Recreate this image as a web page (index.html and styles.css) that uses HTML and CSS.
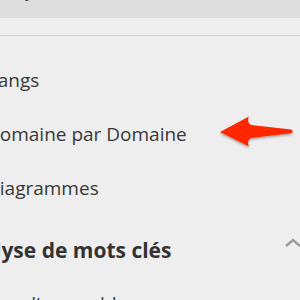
FILE: index.html
```html
<!DOCTYPE html>
<html lang="fr">
<head>
  <meta charset="UTF-8" />
  <title>Menu</title>
  <link rel="stylesheet" href="styles.css">
</head>
<body>

<div class="topbar"><span class="cut">Analy</span></div>
<div class="subbar"></div>

<ul class="menu">
  <li>Rangs</li>
  <li>Domaine par Domaine</li>
  <li>Diagrammes</li>
</ul>

<div class="section">
  <div class="section-head">
    <span>Analyse de mots clés</span>
    <svg class="chevron" width="18" height="10" viewBox="0 0 18 10">
      <path d="M2 8 L9 2 L16 8" fill="none" stroke="#9a9a9a" stroke-width="2.4" />
    </svg>
  </div>
  <ul class="menu sub">
    <li>Vue d'ensemble</li>
  </ul>
</div>

<svg class="pointer" width="90" height="50" viewBox="215 110 90 50">
  <defs>
    <filter id="soft" x="-10%" y="-20%" width="130%" height="150%">
      <feDropShadow dx="0" dy="1.5" stdDeviation="1.2" flood-color="#000" flood-opacity="0.35" />
    </filter>
  </defs>
  <path filter="url(#soft)" fill="#ff2600"
        d="M220 132 L249 116.5 Q246 122 251 125 L291 129.6 Q294.5 131.4 291 133.2 L251 138 Q246 141 249 146.5 Z" />
</svg>

</body>
</html>
```

FILE: styles.css
```css
* {
  margin: 0;
  padding: 0;
  box-sizing: border-box;
}

body {
  width: 300px;
  height: 300px;
  overflow: hidden;
  position: relative;
  background-color: #eeeeee;
  color: #383838;
  font-family: 'Open Sans', 'Noto Sans', sans-serif;
}

.topbar {
  height: 18px;
  background-color: #dddddd;
  overflow: hidden;
}

.topbar .cut {
  display: block;
  margin-top: -22px;
  margin-left: -12px;
  font-size: 18px;
  line-height: 24px;
  color: #444;
}

.subbar {
  height: 18px;
  border-bottom: 1px solid #d5d5d5;
}

.menu {
  list-style: none;
  padding-top: 17px;
  margin-left: -14px;
}

.menu li {
  font-size: 19px;
  line-height: 54px;
  white-space: nowrap;
}

.section {
  margin-top: 8px;
}

.section-head {
  display: flex;
  justify-content: space-between;
  align-items: center;
  margin-left: -46px;
  margin-right: -2px;
  font-size: 21px;
  font-weight: 700;
  line-height: 54px;
  color: #333;
}

.chevron {
  margin-top: -14px;
}

.menu.sub {
  padding-top: 0;
  margin-left: -14px;
}

.pointer {
  position: absolute;
  left: 215px;
  top: 110px;
}
```
